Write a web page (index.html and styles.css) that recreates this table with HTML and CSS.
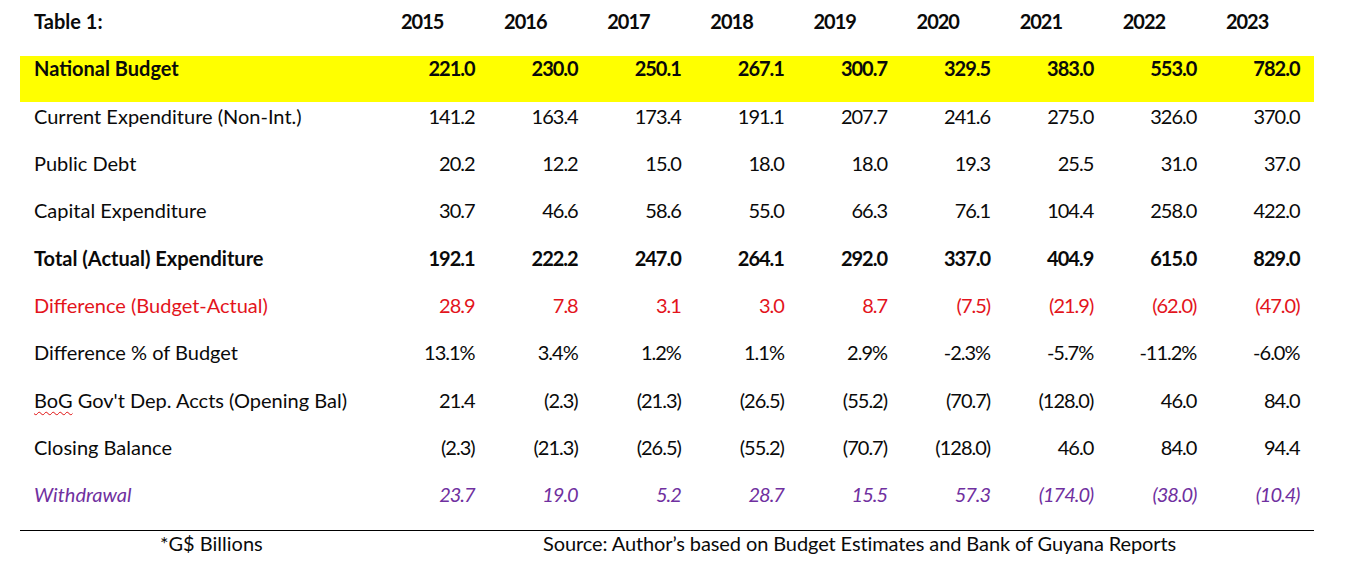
FILE: index.html
```html
<!DOCTYPE html>
<html lang="en">
<head>
<meta charset="utf-8">
<title>Table 1</title>
<link rel="stylesheet" href="styles.css">
</head>
<body>
<div class="table">
  <div class="row head">
    <div class="label">Table 1:</div>
    <div class="year">2015</div><div class="year">2016</div><div class="year">2017</div><div class="year">2018</div><div class="year">2019</div><div class="year">2020</div><div class="year">2021</div><div class="year">2022</div><div class="year">2023</div>
  </div>
  <div class="row bold hl">
    <div class="label">National Budget</div>
    <div class="num">221.0</div><div class="num">230.0</div><div class="num">250.1</div><div class="num">267.1</div><div class="num">300.7</div><div class="num">329.5</div><div class="num">383.0</div><div class="num">553.0</div><div class="num">782.0</div>
  </div>
  <div class="row">
    <div class="label">Current Expenditure (Non-Int.)</div>
    <div class="num">141.2</div><div class="num">163.4</div><div class="num">173.4</div><div class="num">191.1</div><div class="num">207.7</div><div class="num">241.6</div><div class="num">275.0</div><div class="num">326.0</div><div class="num">370.0</div>
  </div>
  <div class="row">
    <div class="label">Public Debt</div>
    <div class="num">20.2</div><div class="num">12.2</div><div class="num">15.0</div><div class="num">18.0</div><div class="num">18.0</div><div class="num">19.3</div><div class="num">25.5</div><div class="num">31.0</div><div class="num">37.0</div>
  </div>
  <div class="row">
    <div class="label">Capital Expenditure</div>
    <div class="num">30.7</div><div class="num">46.6</div><div class="num">58.6</div><div class="num">55.0</div><div class="num">66.3</div><div class="num">76.1</div><div class="num">104.4</div><div class="num">258.0</div><div class="num">422.0</div>
  </div>
  <div class="row bold">
    <div class="label">Total (Actual) Expenditure</div>
    <div class="num">192.1</div><div class="num">222.2</div><div class="num">247.0</div><div class="num">264.1</div><div class="num">292.0</div><div class="num">337.0</div><div class="num">404.9</div><div class="num">615.0</div><div class="num">829.0</div>
  </div>
  <div class="row red">
    <div class="label">Difference (Budget-Actual)</div>
    <div class="num">28.9</div><div class="num">7.8</div><div class="num">3.1</div><div class="num">3.0</div><div class="num">8.7</div><div class="num">(7.5)</div><div class="num">(21.9)</div><div class="num">(62.0)</div><div class="num">(47.0)</div>
  </div>
  <div class="row">
    <div class="label">Difference % of Budget</div>
    <div class="num">13.1%</div><div class="num">3.4%</div><div class="num">1.2%</div><div class="num">1.1%</div><div class="num">2.9%</div><div class="num">-2.3%</div><div class="num">-5.7%</div><div class="num">-11.2%</div><div class="num">-6.0%</div>
  </div>
  <div class="row">
    <div class="label"><span class="spell">BoG</span> Gov't Dep. Accts (Opening Bal)</div>
    <div class="num">21.4</div><div class="num">(2.3)</div><div class="num">(21.3)</div><div class="num">(26.5)</div><div class="num">(55.2)</div><div class="num">(70.7)</div><div class="num">(128.0)</div><div class="num">46.0</div><div class="num">84.0</div>
  </div>
  <div class="row">
    <div class="label">Closing Balance</div>
    <div class="num">(2.3)</div><div class="num">(21.3)</div><div class="num">(26.5)</div><div class="num">(55.2)</div><div class="num">(70.7)</div><div class="num">(128.0)</div><div class="num">46.0</div><div class="num">84.0</div><div class="num">94.4</div>
  </div>
  <div class="row purple last">
    <div class="label">Withdrawal</div>
    <div class="num">23.7</div><div class="num">19.0</div><div class="num">5.2</div><div class="num">28.7</div><div class="num">15.5</div><div class="num">57.3</div><div class="num">(174.0)</div><div class="num">(38.0)</div><div class="num">(10.4)</div>
  </div>
  <div class="foot">
    <div class="units">*G$ Billions</div>
    <div class="source">Source: Author’s based on Budget Estimates and Bank of Guyana Reports</div>
  </div>
</div>
</body>
</html>
```
FILE: styles.css
```css
html, body {
  margin: 0;
  padding: 0;
  background: #ffffff;
}
body {
  font-family: "Lato", "Carlito", "Liberation Sans", sans-serif;
  font-size: 20px;
  line-height: 24px;
  color: #0a0a0a;
  padding-top: 9px;
}
.table {
  width: 1294px;
  margin-left: 20px;
}
.row {
  display: grid;
  grid-template-columns: 366px repeat(9, 1fr);
  height: 47.33px;
  box-sizing: border-box;
}
.row > div {
  white-space: nowrap;
}
.label {
  padding-left: 14px;
}
.year {
  padding-left: 15px;
  font-weight: 700;
  letter-spacing: -1px;
}
.num {
  text-align: right;
  padding-right: 14.5px;
  letter-spacing: -1px;
}
.head .label { font-weight: 700; }
.bold { font-weight: 700; }
.hl > div {
  background: #ffff00;
  height: 46px;
}
.red { color: #e3141c; }
.purple {
  color: #7030a0;
  font-style: italic;
}
.last {
  border-bottom: 1px solid #000;
  height: 48.33px;
}
.spell {
  text-decoration: underline wavy #e01010;
  text-decoration-thickness: 1px;
  text-underline-offset: 3px;
}
.foot {
  display: grid;
  grid-template-columns: 523px 1fr;
}
.units {
  padding-left: 140px;
}
.source {
  white-space: nowrap;
  letter-spacing: -0.1px;
}
```
